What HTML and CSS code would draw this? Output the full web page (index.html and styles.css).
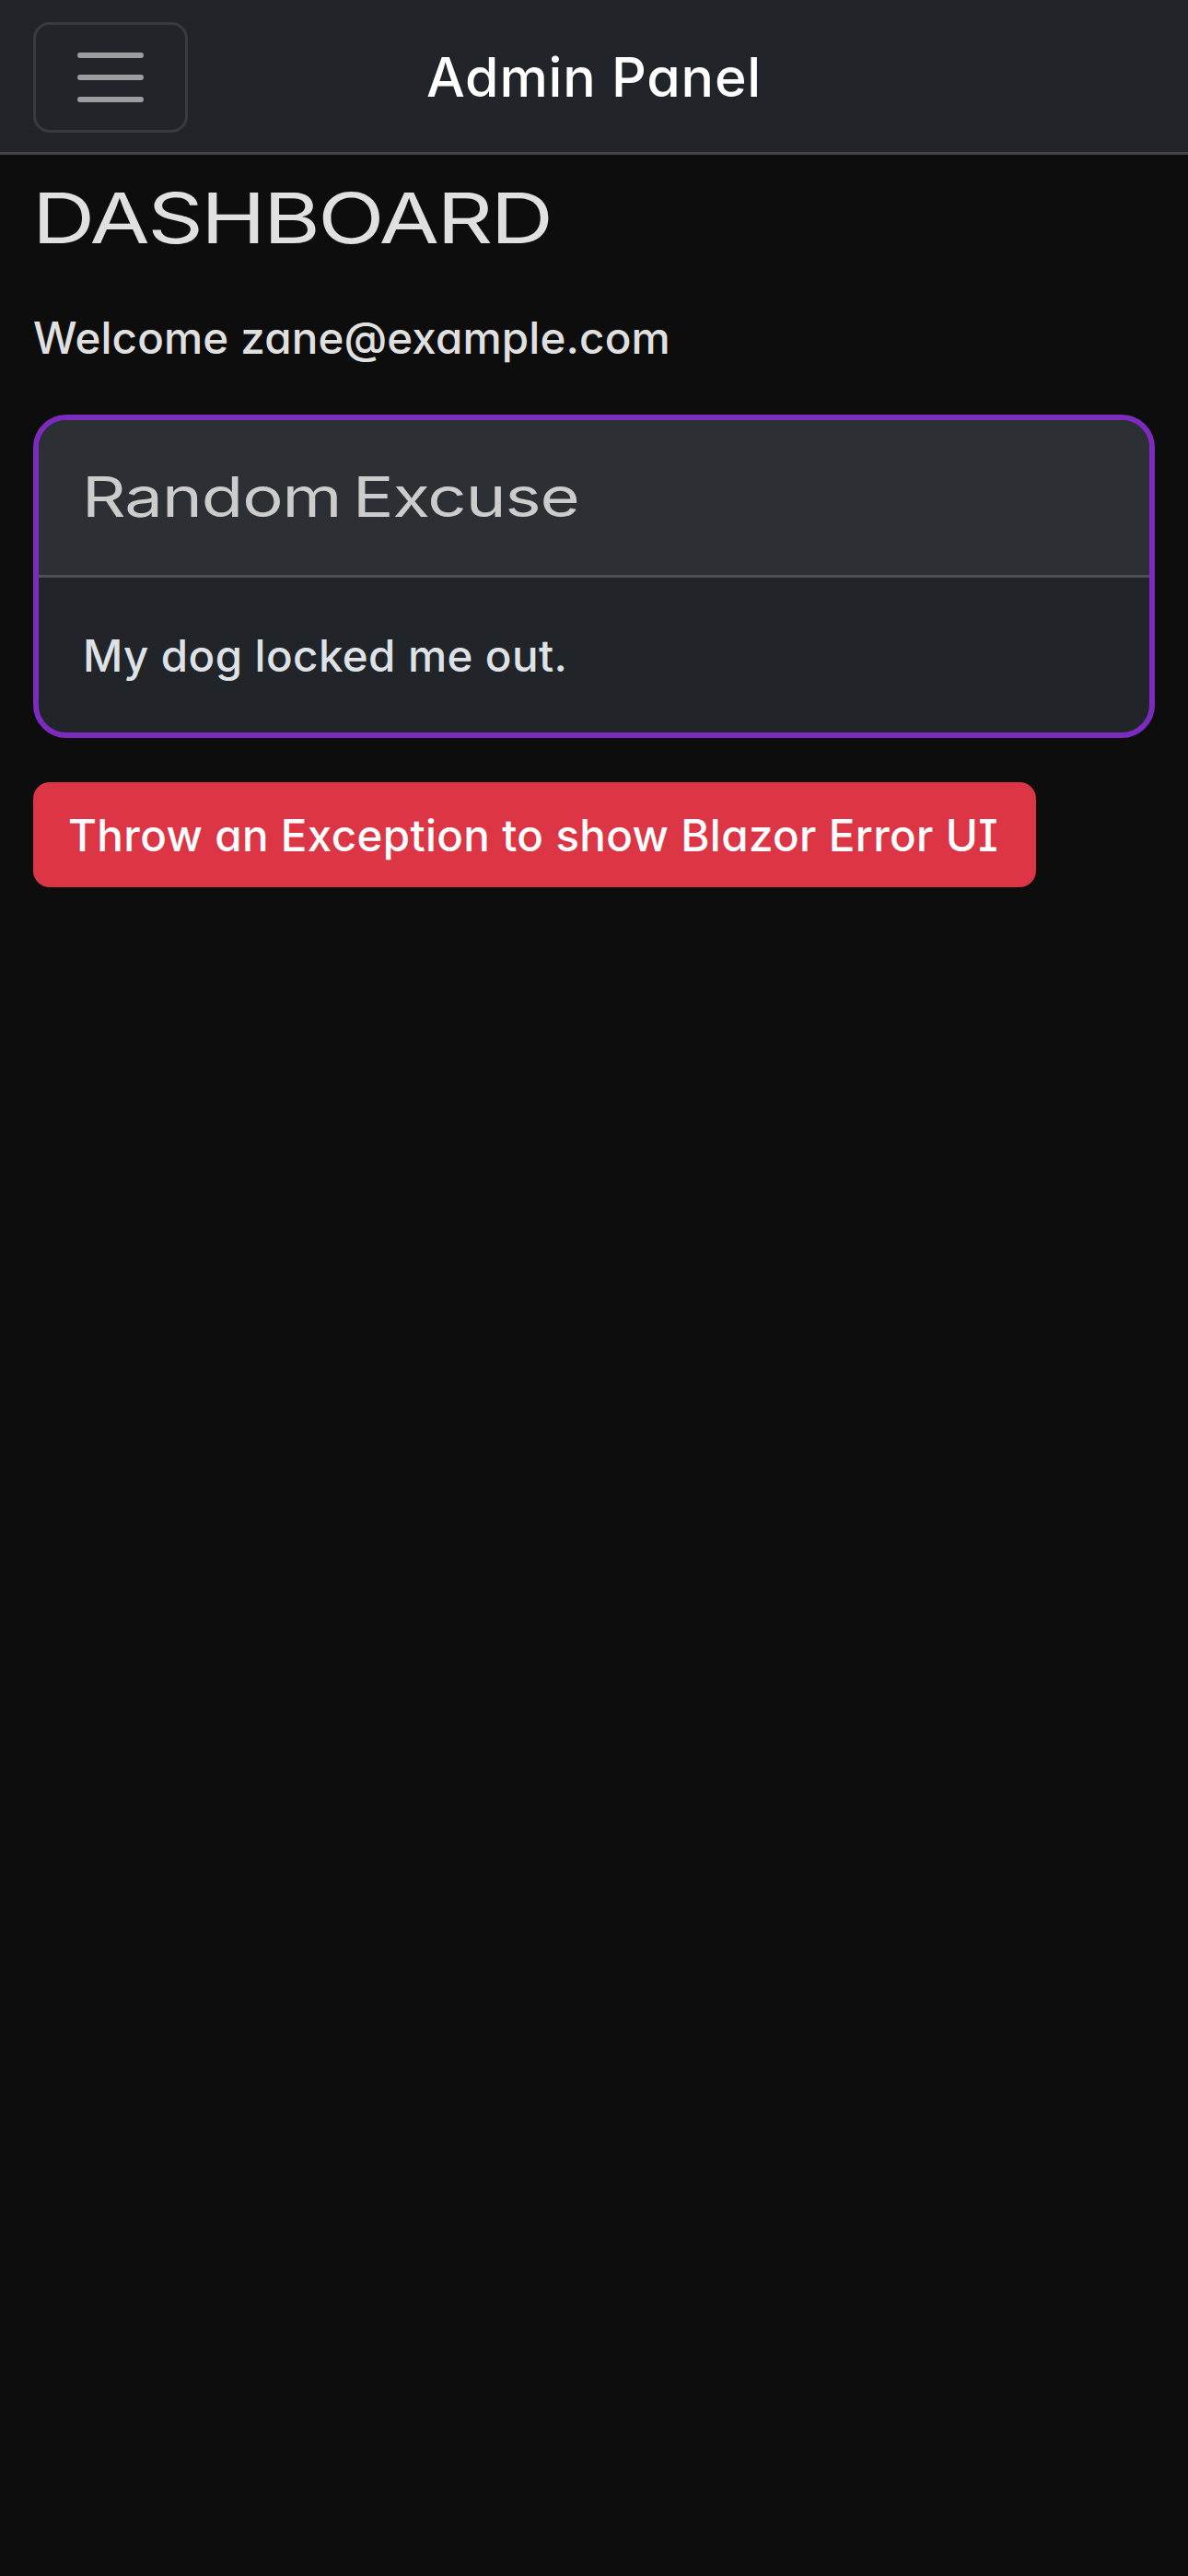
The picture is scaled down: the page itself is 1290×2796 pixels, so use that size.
FILE: index.html
```html
<!DOCTYPE html>
<html lang="en">
<head>
<meta charset="utf-8">
<title>Admin Panel</title>
<link rel="stylesheet" href="styles.css">
</head>
<body>
<header class="topbar">
  <button class="toggler" aria-label="Menu">
    <svg class="toggler-icon" viewBox="0 0 30 30"><path stroke="currentColor" stroke-linecap="round" stroke-miterlimit="10" stroke-width="2" d="M4 7h22M4 15h22M4 23h22"/></svg>
  </button>
  <div class="brand">Admin Panel</div>
</header>
<main class="content">
  <h1 class="title"><span>DASHBOARD</span></h1>
  <p class="welcome">Welcome zane@example.com</p>
  <section class="card">
    <h2 class="card-header"><span>Random Excuse</span></h2>
    <div class="card-body">My dog locked me out.</div>
  </section>
  <button class="danger">Throw an Exception to show Blazor Error UI</button>
</main>
</body>
</html>
```
FILE: styles.css
```css
* { box-sizing: border-box; }

body {
  margin: 0;
  min-height: 2796px;
  background: #0d0d0d;
  color: #e0e0e0;
  font: 500 47.5px/72px Inter, "Noto Sans", sans-serif;
  font-feature-settings: "cv08", "cv11", "ss03";
}

.topbar {
  display: grid;
  grid-template-columns: 168px 1fr 168px;
  align-items: center;
  height: 168px;
  padding: 24px 36px 21px;
  background: #212529;
  border-bottom: 3px solid #444;
}

.toggler {
  display: flex;
  align-items: center;
  justify-content: center;
  width: 168px;
  height: 120px;
  padding: 0;
  background: transparent;
  border: 3px solid #373b3e;
  border-radius: 18px;
  color: #9b9d9f;
}

.toggler-icon { width: 90px; height: 90px; }

.brand {
  text-align: center;
  color: #fff;
  font-size: 59px;
  line-height: 70px;
  letter-spacing: 0.8px;
}

.content { padding: 0 36px; }

.title, .card-header {
  margin: 0;
  font-weight: 400;
  font-feature-settings: "ss03";
}

.title {
  height: 114px;
  padding-top: 23px;
  font-size: 76px;
  line-height: 90px;
}

.title span, .card-header span {
  display: inline-block;
  transform-origin: left;
}

.title span {
  margin-left: -1px;
  letter-spacing: -2px;
  transform: scaleX(1.243);
}

.card-header span {
  margin-left: -1px;
  letter-spacing: -0.8px;
  word-spacing: -6px;
  transform: scaleX(1.235);
}

.welcome { margin: 49px 0 47px; letter-spacing: 0.16px; }

.card {
  height: 351px;
  border: 6px solid #7b2cbf;
  border-radius: 36px;
  background: #212529;
  overflow: hidden;
}

.card-header {
  height: 171px;
  padding: 47px 48px;
  background: #2c3034;
  border-bottom: 3px solid #4d5154;
  color: #ccc;
  font-size: 60px;
}

.card-body {
  padding: 49px 48px 0;
  color: #dee2e6;
  letter-spacing: 0.4px;
}

.danger {
  display: block;
  width: 1089px;
  height: 114px;
  margin-top: 48px;
  padding: 2px 0 0 38px;
  border: 0;
  border-radius: 18px;
  background: #dc3545;
  color: #fff;
  font: inherit;
  font-feature-settings: inherit;
  letter-spacing: 0.36px;
  text-align: left;
  white-space: nowrap;
}
```
